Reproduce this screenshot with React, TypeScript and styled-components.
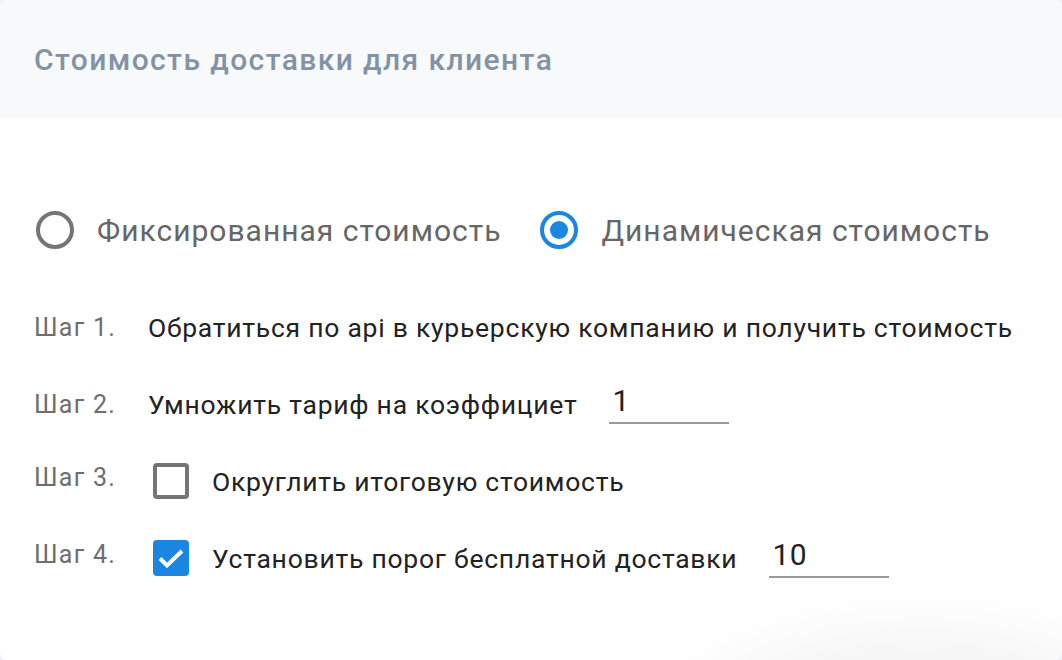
import styled, { createGlobalStyle } from "styled-components";

const GlobalStyle = createGlobalStyle`
	html, body {
		margin: 0;
		padding: 0;
		background: #eef1f5;
		font-family: Roboto, "Noto Sans", sans-serif;
	}
`;

const Card = styled.div`
	position: relative;
	width: 1062px;
	height: 660px;
	background: #fff;
	border-radius: 8px;
	overflow: hidden;

	&::after {
		content: "";
		position: absolute;
		right: -60px;
		bottom: -70px;
		width: 500px;
		height: 140px;
		background: radial-gradient(ellipse at 60% 100%, rgba(0, 0, 0, 0.08), rgba(0, 0, 0, 0) 70%);
		pointer-events: none;
	}
`;

const Header = styled.div`
	height: 118px;
	background: #f8f9fb;
	display: flex;
	align-items: center;
	padding: 0 34px;
`;

const Title = styled.h2`
	margin: 0;
	font-size: 30px;
	font-weight: 500;
	color: #8393a6;
	letter-spacing: 1.4px;
`;

const Body = styled.div`
	padding: 93px 34px 0;
`;

const RadioGroup = styled.div`
	display: flex;
	align-items: center;
	gap: 37px;
	height: 38px;
	margin-bottom: 54px;
`;

const RadioItem = styled.label`
	display: flex;
	align-items: center;
	gap: 23px;
	font-size: 30px;
	letter-spacing: 1px;
	color: #666;
	cursor: pointer;
	margin-left: 2px;
`;

const RadioCircle = styled.span<{ $checked?: boolean }>`
	box-sizing: border-box;
	width: 38px;
	height: 38px;
	border-radius: 50%;
	border: 4px solid ${(p) => (p.$checked ? "#1a86e2" : "#757575")};
	display: flex;
	align-items: center;
	justify-content: center;

	&::before {
		content: "";
		width: 18px;
		height: 18px;
		border-radius: 50%;
		background: #1a86e2;
		display: ${(p) => (p.$checked ? "block" : "none")};
	}
`;

const Steps = styled.div`
	display: flex;
	flex-direction: column;
	gap: 29px;
`;

const Step = styled.div`
	display: flex;
	align-items: center;
	height: 48px;
`;

const StepLabel = styled.span<{ $raise?: boolean }>`
	width: 114px;
	flex-shrink: 0;
	font-size: 25px;
	letter-spacing: 1.3px;
	color: #6e6e6e;
	margin-bottom: ${(p) => (p.$raise ? "8px" : "0")};
`;

const StepText = styled.span`
	font-size: 26.5px;
	letter-spacing: 0.75px;
	color: #222;
`;

const CheckBox = styled.span<{ $checked?: boolean }>`
	box-sizing: border-box;
	width: 36px;
	height: 36px;
	margin-left: 5px;
	margin-right: 23px;
	border-radius: 4px;
	border: ${(p) => (p.$checked ? "none" : "4px solid #757575")};
	background: ${(p) => (p.$checked ? "#1a86e2" : "#fff")};
	display: flex;
	align-items: center;
	justify-content: center;
	flex-shrink: 0;
`;

const NumberInput = styled.input`
	box-sizing: border-box;
	width: 120px;
	height: 40px;
	margin-left: 32px;
	border: none;
	border-bottom: 2px solid #999;
	outline: none;
	padding: 0 3px 5px;
	font-family: inherit;
	font-size: 30px;
	letter-spacing: 0.5px;
	color: #222;
	background: transparent;
`;

const Check = () => (
	<svg width="32" height="32" viewBox="0 0 32 32">
		<path d="M5 16.5l7 7L27 9" fill="none" stroke="#fff" strokeWidth="4" />
	</svg>
);

export default function App() {
	return (
		<>
			<GlobalStyle />
			<Card>
				<Header>
					<Title>Стоимость доставки для клиента</Title>
				</Header>
				<Body>
					<RadioGroup>
						<RadioItem>
							<RadioCircle />
							Фиксированная стоимость
						</RadioItem>
						<RadioItem>
							<RadioCircle $checked />
							Динамическая стоимость
						</RadioItem>
					</RadioGroup>
					<Steps>
						<Step>
							<StepLabel>Шаг 1.</StepLabel>
							<StepText>Обратиться по api в курьерскую компанию и получить стоимость</StepText>
						</Step>
						<Step>
							<StepLabel>Шаг 2.</StepLabel>
							<StepText>Умножить тариф на коэффициет</StepText>
							<NumberInput defaultValue="1" />
						</Step>
						<Step>
							<StepLabel $raise>Шаг 3.</StepLabel>
							<CheckBox />
							<StepText>Округлить итоговую стоимость</StepText>
						</Step>
						<Step>
							<StepLabel $raise>Шаг 4.</StepLabel>
							<CheckBox $checked>
								<Check />
							</CheckBox>
							<StepText>Установить порог бесплатной доставки</StepText>
							<NumberInput defaultValue="10" />
						</Step>
					</Steps>
				</Body>
			</Card>
		</>
	);
}
